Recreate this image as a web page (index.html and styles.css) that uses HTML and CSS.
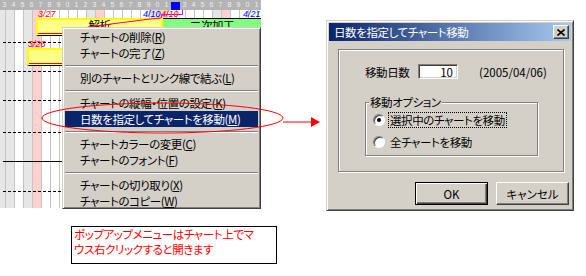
FILE: index.html
```html
<!DOCTYPE html>
<html lang="ja">

<head>
    <meta charset="UTF-8">
    <title>日数を指定してチャート移動</title>
    <link rel="stylesheet" href="styles.css">
</head>

<body>
    <div class="scene">
        <div class="top">
            <!-- ガントチャート部分 -->
            <div class="chart">
                <div class="chart-head">
                    <span>3</span><span>4</span><span>5</span><span>6</span><span>7</span><span>8</span><span>9</span>
                    <span>0</span><span>1</span><span>2</span><span>3</span><span>4</span><span>5</span><span>6</span>
                    <span>7</span><span>8</span><span>9</span><span>0</span><span>1</span><span class="today"></span>
                    <span>3</span><span>4</span><span>5</span><span>6</span><span>7</span><span>8</span><span>9</span>
                    <span>0</span><span>1</span>
                </div>
                <div class="chart-rows">
                    <div class="row tall"></div>
                    <div class="row"></div>
                    <div class="row"></div>
                    <div class="row tall2"></div>
                    <div class="row solid"></div>
                    <div class="row wide"></div>
                </div>

                <span class="date red d1">3/27</span>
                <span class="date blue d2">4/10</span>
                <span class="date red d3">4/10</span>
                <span class="date blue d4">4/21</span>
                <span class="date red d5">3/26</span>

                <div class="bar plan bar-a">解析</div>
                <div class="bar green bar-b">二次加工</div>
                <div class="bar plan bar-c"></div>

                <svg class="links" width="261" height="40">
                    <path d="M88 27 L150 19 L161 18" fill="none" stroke="#ff0055" />
                    <path d="M161.5 18 V14.5 H182.5 V10" fill="none" stroke="#ff00aa" />
                </svg>

                <div class="menu">
                    <div class="item">チャートの削除(<u>R</u>)</div>
                    <div class="item">チャートの完了(<u>Z</u>)</div>
                    <div class="sep"><div></div></div>
                    <div class="item">別のチャートとリンク線で結ぶ(<u>L</u>)</div>
                    <div class="sep"><div></div></div>
                    <div class="item">チャートの縦幅・位置の設定(<u>K</u>)</div>
                    <div class="item active">日数を指定してチャートを移動(<u>M</u>)</div>
                    <div class="sep"><div></div></div>
                    <div class="item">チャートカラーの変更(<u>C</u>)</div>
                    <div class="item">チャートのフォント(<u>F</u>)</div>
                    <div class="sep"><div></div></div>
                    <div class="item">チャートの切り取り(<u>X</u>)</div>
                    <div class="item">チャートのコピー(<u>W</u>)</div>
                </div>
            </div>

            <!-- ダイアログ -->
            <div class="dialog">
                <div class="titlebar">
                    <span>日数を指定してチャート移動</span>
                    <span class="close">
                        <svg width="8" height="7" viewBox="0 0 8 7">
                            <path d="M0.5 0.5 L7.5 6.5 M7.5 0.5 L0.5 6.5" stroke="#000" stroke-width="1.6" />
                        </svg>
                    </span>
                </div>
                <div class="panel">
                    <div class="days-row">
                        <span class="days-label">移動日数</span>
                        <input class="days" type="text" value="10" readonly>
                        <span class="days-date">(2005/04/06)</span>
                    </div>
                    <fieldset class="options">
                        <legend>移動オプション</legend>
                        <div class="opt">
                            <span class="radio on"></span>
                            <span class="opt-text focus">選択中のチャートを移動</span>
                        </div>
                        <div class="opt">
                            <span class="radio"></span>
                            <span class="opt-text">全チャートを移動</span>
                        </div>
                    </fieldset>
                </div>
                <div class="buttons">
                    <button class="btn default">OK</button>
                    <button class="btn">キャンセル</button>
                </div>
            </div>
        </div>

        <div class="note">ポップアップメニューはチャート上でマ<br>ウス右クリックすると開きます</div>

        <!-- 注釈の楕円と矢印 -->
        <svg class="annot" width="586" height="276">
            <ellipse cx="162.5" cy="118" rx="120.5" ry="15" fill="none" stroke="#ff0000" />
            <line x1="283" y1="122" x2="312" y2="122" stroke="#ff0000" />
            <polygon points="311,117 320,122 311,127" fill="#ff0000" />
        </svg>
    </div>
</body>

</html>
```

FILE: styles.css
```css
* {
    box-sizing: border-box;
}

body {
    margin: 0;
    background-color: #fff;
    font-family: "Noto Sans CJK JP", sans-serif;
    font-size: 11.5px;
    letter-spacing: -0.4px;
    font-feature-settings: "palt";
    color: #000;
}

.scene {
    position: relative;
    width: 586px;
    height: 276px;
    overflow: hidden;
}

.top {
    display: flex;
    align-items: flex-start;
}

/* chart */

.chart {
    position: relative;
    width: 261px;
    height: 208px;
    flex: none;
}

.chart-head {
    height: 10px;
    display: flex;
    background-color: #b4b4b4;
    color: #eeeeee;
    font: 7px/10px "Liberation Sans", sans-serif;
    letter-spacing: 0;
}

.chart-head span {
    width: 9px;
    flex: none;
    text-align: center;
}

.chart-head .today {
    height: 8px;
    margin-top: 2px;
    background-color: #0000ff;
}

.chart-rows {
    height: 198px;
    background-image:
        repeating-linear-gradient(90deg, #c4c4c4 0 1px, transparent 1px 9px),
        linear-gradient(90deg,
            #e6e6e6 0 15px, #fff 15px 24px, #e6e6e6 24px 33px, #ffd0d0 33px 42px,
            #fff 42px 87px, #e6e6e6 87px 96px, #ffd0d0 96px 105px,
            #fff 105px 150px, #e6e6e6 150px 159px, #ffd0d0 159px 168px,
            #fff 168px 213px, #e6e6e6 213px 222px, #ffd0d0 222px 231px, #fff 231px);
    background-position: 5px 0, 0 0;
}

.row {
    height: 29px;
    margin-left: 3px;
    border-bottom: 1px dashed #000;
}

.row.tall {
    height: 33px;
}

.row.tall2 {
    height: 32px;
}

.row.wide {
    height: 30px;
}

.row.solid {
    border-bottom-style: solid;
}

.date {
    position: absolute;
    font: italic 9px/8px "Liberation Sans", sans-serif;
    letter-spacing: 0;
}

.red {
    color: #ff0000;
}

.blue {
    color: #0000ff;
}

.d1 { left: 38px; top: 10px; }
.d2 { left: 143px; top: 10px; }
.d3 { left: 161px; top: 10px; }
.d4 { left: 243px; top: 10px; }
.d5 { left: 28px; top: 40px; }

.bar {
    position: absolute;
    height: 18px;
    text-align: center;
    line-height: 10px;
    white-space: nowrap;
    overflow: hidden;
}

.bar.plan {
    background: linear-gradient(to top, transparent 0 1px, #ff0000 1px 2px, transparent 2px) #ffff88;
    border: 2px solid #ffff00;
    border-bottom: 1px solid #000;
}

.bar.green {
    background-color: #80ff80;
    border-top: 1px solid #000;
    padding-top: 1px;
}

.bar-a { left: 36px; top: 18px; width: 127px; }
.bar-b { left: 163px; top: 18px; width: 98px; }
.bar-c { left: 27px; top: 48px; width: 60px; }

.links {
    position: absolute;
    left: 0;
    top: 0;
}

/* popup menu */

.menu {
    position: absolute;
    left: 62px;
    top: 27px;
    width: 199px;
    height: 182px;
    padding: 1px 2px;
    background-color: #d4d0c8;
    border: 1px solid;
    border-color: #d4d0c8 #404040 #404040 #d4d0c8;
    box-shadow: inset 1px 1px #fff, inset -1px -1px #808080;
}

.item {
    height: 16px;
    line-height: 16px;
    padding-left: 15px;
    white-space: nowrap;
}

.item.active {
    background-color: #0a246a;
    color: #fff;
}

.sep {
    height: 9px;
    padding-top: 4px;
}

.sep div {
    height: 2px;
    border-top: 1px solid #808080;
    border-bottom: 1px solid #fff;
}

/* dialog */

.dialog {
    width: 248px;
    height: 191px;
    margin: 20px 0 0 65px;
    flex: none;
    padding: 2px;
    background-color: #d4d0c8;
    border: 1px solid;
    border-color: #d4d0c8 #404040 #404040 #d4d0c8;
    box-shadow: inset 1px 1px #fff, inset -1px -1px #808080;
}

.titlebar {
    height: 18px;
    display: flex;
    align-items: center;
    justify-content: space-between;
    padding: 0 2px 0 5px;
    background: linear-gradient(90deg, #0a246a, #a6caf0);
    color: #fff;
}

.close {
    width: 16px;
    height: 14px;
    display: flex;
    align-items: center;
    justify-content: center;
    background-color: #d4d0c8;
    border: 1px solid;
    border-color: #fff #404040 #404040 #fff;
    box-shadow: inset -1px -1px #808080;
}

.panel {
    height: 123px;
    margin: 8px 7px 0 9px;
    padding: 14px 0 0 26px;
    border: 1px solid #808080;
    box-shadow: inset 1px 1px #fff, 1px 1px #fff;
}

.days-row {
    display: flex;
    align-items: center;
    height: 15px;
}

.days-label {
    width: 53px;
}

.days {
    width: 40px;
    height: 15px;
    padding: 0 4px 0 0;
    font: inherit;
    text-align: right;
    background-color: #fff;
    border: 1px solid;
    border-color: #808080 #fff #fff #808080;
    box-shadow: inset 1px 1px #404040, inset -1px -1px #d4d0c8;
    outline: none;
}

.days-date {
    margin-left: 21px;
    letter-spacing: 0;
}

.options {
    width: 173px;
    height: 60px;
    margin: 17px 0 0;
    padding: 4px 0 0;
    border: 1px solid #808080;
    box-shadow: inset 1px 1px #fff, 1px 1px #fff;
}

.options legend {
    margin-left: 3px;
    padding: 0 1px;
    line-height: 12px;
    background-color: #d4d0c8;
}

.opt {
    display: flex;
    align-items: center;
    height: 16px;
    margin-left: 7px;
    margin-bottom: 6px;
}

.radio {
    width: 12px;
    height: 12px;
    margin-right: 3px;
    display: flex;
    align-items: center;
    justify-content: center;
    border-radius: 50%;
    background-color: #fff;
    border: 1px solid;
    border-color: #808080 #fff #fff #808080;
    box-shadow: inset 1px 1px #404040;
}

.radio.on::after {
    content: "";
    width: 4px;
    height: 4px;
    border-radius: 50%;
    background-color: #000;
}

.opt-text {
    height: 16px;
    line-height: 14px;
    padding: 0 1px;
    border: 1px solid transparent;
}

.opt-text.focus {
    border: 1px dotted #000;
}

.buttons {
    display: flex;
    justify-content: flex-end;
    gap: 8px;
    margin-top: 10px;
    padding-right: 2px;
}

.btn {
    width: 73px;
    height: 23px;
    padding: 0;
    font: inherit;
    color: #000;
    background-color: #d4d0c8;
    border: 1px solid;
    border-color: #fff #404040 #404040 #fff;
    box-shadow: inset -1px -1px #808080;
}

.btn.default {
    border-color: #000;
    box-shadow: inset 1px 1px #fff, inset -1px -1px #404040, inset -2px -2px #808080;
}

/* note */

.note {
    width: 206px;
    height: 38px;
    margin: 15px 0 0 71px;
    padding-left: 2px;
    line-height: 15px;
    color: #ff0000;
    border: 1px solid #000;
    white-space: nowrap;
}

.annot {
    position: absolute;
    left: 0;
    top: 0;
    pointer-events: none;
}
```
